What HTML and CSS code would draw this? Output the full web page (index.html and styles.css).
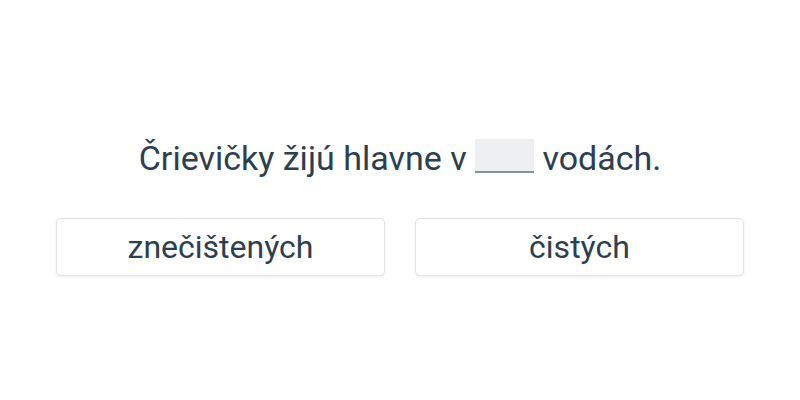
FILE: index.html
```html
<!DOCTYPE html>
<html lang="sk">
  <head>
    <meta charset="UTF-8" />
    <meta name="viewport" content="width=device-width, initial-scale=1.0" />
    <title>Doplň slovo</title>
    <link rel="stylesheet" href="styles.css">
  </head>
  <body>
    <div class="quiz">
      <p class="sentence">Črievičky žijú hlavne v <span class="blank"></span> vodách.</p>
      <div class="options">
        <button type="button" class="option">znečištených</button>
        <button type="button" class="option">čistých</button>
      </div>
    </div>
  </body>
</html>
```

FILE: styles.css
```css
* {
  box-sizing: border-box;
  padding: 0;
  margin: 0;
  font-family: Roboto, "Liberation Sans", sans-serif;
}
body {
  height: 100vh;
  background-color: #fff;
  color: #2c3e50;
}
.quiz {
  width: 688px;
  margin: 0 auto;
  padding-top: 136px;
}
.sentence {
  font-size: 34px;
  line-height: 44px;
  text-align: center;
}
.blank {
  display: inline-block;
  width: 59px;
  height: 34px;
  vertical-align: -3px;
  background-color: #eeeff1;
  border-bottom: 2px solid #7f9696;
}
.options {
  display: grid;
  grid-template-columns: 1fr 1fr;
  gap: 30px;
  margin-top: 38px;
}
.option {
  height: 58px;
  border: 1px solid #e2e4e6;
  border-radius: 5px;
  background-color: #fff;
  box-shadow: 0 1px 3px rgba(0, 0, 0, 0.08);
  color: #2c3e50;
  font-size: 32px;
  cursor: pointer;
}
```
